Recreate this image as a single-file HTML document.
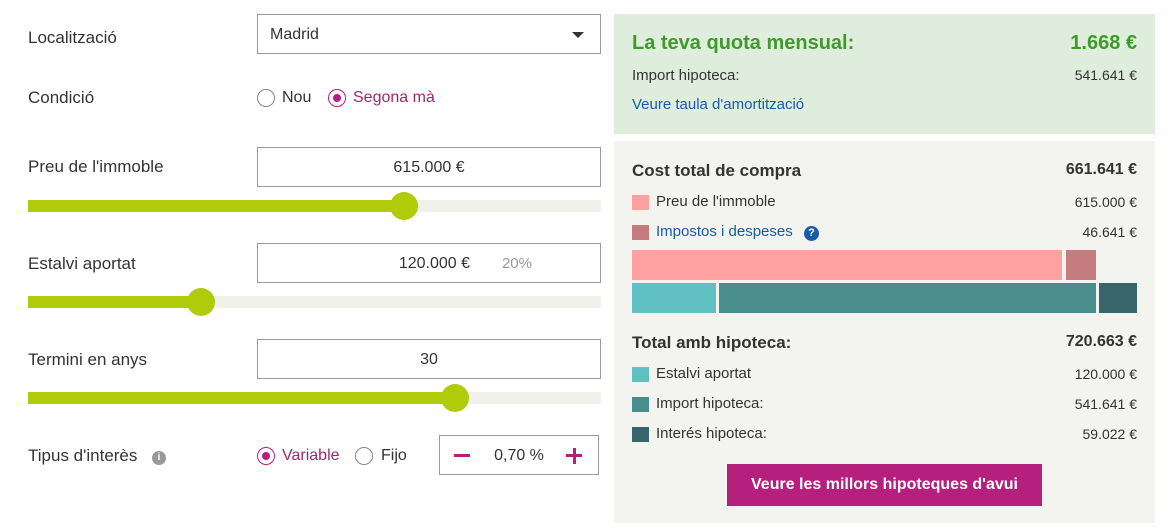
<!DOCTYPE html>
<html><head><meta charset="utf-8"><style>
*{margin:0;padding:0;box-sizing:border-box}
body{width:1173px;height:530px;background:#fff;font-family:"Liberation Sans",sans-serif;color:#333;position:relative;overflow:hidden}
.a{position:absolute}
.lbl{font-size:17px;color:#333}
.box{position:absolute;border:1px solid #999;background:#fff;height:40px}
.track{position:absolute;left:28px;width:573px;height:12px;background:#f1f1ec}
.fill{position:absolute;left:0;top:0;height:12px;background:#afcb0a}
.thumb{position:absolute;top:-8px;width:28px;height:28px;border-radius:50%;background:#afcb0a}
.radio{position:absolute;width:18px;height:18px;border-radius:50%;border:1px solid #888;background:#fff}
.radio.on{border-color:#b5207f}
.radio.on::after{content:"";position:absolute;left:4px;top:4px;width:8px;height:8px;border-radius:50%;background:#b5207f}
.r{font-size:15px;color:#333}
.val{position:absolute;right:36px;font-size:15px;color:#333}
.sq{position:absolute;left:632px;width:17px;height:15px}
</style></head><body>
<div class="a lbl" style="left:28px;top:28px">Localització</div>
<div class="box" style="left:257px;top:14px;width:344px"><span class="a" style="left:12px;top:11px;font-size:16px">Madrid</span><span class="a" style="right:16px;top:17px;width:0;height:0;border-left:6px solid transparent;border-right:6px solid transparent;border-top:6px solid #333"></span></div>

<div class="a lbl" style="left:28px;top:88px">Condició</div>
<div class="radio" style="left:257px;top:89px"></div><div class="a" style="left:282px;top:89px;font-size:16px">Nou</div>
<div class="radio on" style="left:328px;top:89px"></div><div class="a" style="left:353px;top:89px;font-size:16px;color:#a0276f">Segona mà</div>

<div class="a lbl" style="left:28px;top:157px">Preu de l'immoble</div>
<div class="box" style="left:257px;top:147px;width:344px"><span class="a" style="left:0;width:100%;text-align:center;top:11px;font-size:16px">615.000 €</span></div>
<div class="track" style="top:200px"><div class="fill" style="width:376px"></div><div class="thumb" style="left:362px"></div></div>

<div class="a lbl" style="left:28px;top:254px">Estalvi aportat</div>
<div class="box" style="left:257px;top:243px;width:344px"><span class="a" style="right:130px;top:11px;font-size:16px">120.000 €</span><span class="a" style="right:68px;top:11px;font-size:15px;color:#999">20%</span></div>
<div class="track" style="top:296px"><div class="fill" style="width:173px"></div><div class="thumb" style="left:159px"></div></div>

<div class="a lbl" style="left:28px;top:350px">Termini en anys</div>
<div class="box" style="left:257px;top:339px;width:344px"><span class="a" style="left:0;width:100%;text-align:center;top:11px;font-size:16px">30</span></div>
<div class="track" style="top:392px"><div class="fill" style="width:427px"></div><div class="thumb" style="left:413px"></div></div>

<div class="a lbl" style="left:28px;top:446px">Tipus d'interès</div>
<div class="a" style="left:152px;top:451px;width:14px;height:14px;border-radius:50%;background:#999;color:#fff;font-size:10px;font-weight:bold;text-align:center;line-height:14px">i</div>
<div class="radio on" style="left:257px;top:447px"></div><div class="a" style="left:282px;top:447px;font-size:16px;color:#a0276f">Variable</div>
<div class="radio" style="left:355px;top:447px"></div><div class="a" style="left:381px;top:447px;font-size:16px">Fijo</div>
<div class="box" style="left:439px;top:435px;width:160px"><span class="a" style="left:14px;top:18px;width:16px;height:3px;background:#b5207f"></span><span class="a" style="left:0;width:100%;text-align:center;top:11px;font-size:16px">0,70 %</span><span class="a" style="right:16px;top:18px;width:16px;height:3px;background:#b5207f"></span><span class="a" style="right:22px;top:12px;width:3px;height:16px;background:#b5207f"></span></div>

<div class="a" style="left:614px;top:14px;width:541px;height:120px;background:#dfeedc"></div>
<div class="a" style="left:632px;top:32px;font-size:20px;font-weight:bold;color:#3e9a2b">La teva quota mensual:</div>
<div class="a" style="right:36px;top:32px;font-size:20px;font-weight:bold;color:#3e9a2b">1.668 €</div>
<div class="a" style="left:632px;top:67px;font-size:15px">Import hipoteca:</div>
<div class="val" style="top:67px;font-size:14px">541.641 €</div>
<div class="a" style="left:632px;top:96px;font-size:15px;color:#1a5aa8">Veure taula d'amortització</div>

<div class="a" style="left:614px;top:141px;width:541px;height:382px;background:#f3f3ef"></div>
<div class="a" style="left:632px;top:161px;font-size:17px;font-weight:bold">Cost total de compra</div>
<div class="val" style="top:161px;font-size:16px;font-weight:bold">661.641 €</div>
<div class="sq" style="top:195px;background:#fea1a0"></div><div class="a" style="left:656px;top:193px;font-size:15px">Preu de l'immoble</div><div class="val" style="top:194px;font-size:14px">615.000 €</div>
<div class="sq" style="top:225px;background:#c47c7e"></div><div class="a" style="left:656px;top:223px;font-size:15px;color:#1a5aa8">Impostos i despeses</div>
<div class="a" style="left:804px;top:226px;width:15px;height:15px;border-radius:50%;background:#1a5aa8;color:#fff;font-size:11px;font-weight:bold;text-align:center;line-height:15px">?</div>
<div class="val" style="top:224px;font-size:14px">46.641 €</div>
<div class="a" style="left:632px;top:250px;width:430px;height:30px;background:#fea1a0"></div>
<div class="a" style="left:1066px;top:250px;width:30px;height:30px;background:#c47c7e"></div>
<div class="a" style="left:632px;top:283px;width:84px;height:30px;background:#61c1c2"></div>
<div class="a" style="left:719px;top:283px;width:377px;height:30px;background:#498d8d"></div>
<div class="a" style="left:1099px;top:283px;width:38px;height:30px;background:#38666a"></div>

<div class="a" style="left:632px;top:333px;font-size:17px;font-weight:bold">Total amb hipoteca:</div>
<div class="val" style="top:333px;font-size:16px;font-weight:bold">720.663 €</div>
<div class="sq" style="top:367px;background:#61c1c2"></div><div class="a" style="left:656px;top:365px;font-size:15px">Estalvi aportat</div><div class="val" style="top:366px;font-size:14px">120.000 €</div>
<div class="sq" style="top:397px;background:#498d8d"></div><div class="a" style="left:656px;top:395px;font-size:15px">Import hipoteca:</div><div class="val" style="top:396px;font-size:14px">541.641 €</div>
<div class="sq" style="top:427px;background:#38666a"></div><div class="a" style="left:656px;top:425px;font-size:15px">Interés hipoteca:</div><div class="val" style="top:426px;font-size:14px">59.022 €</div>

<div class="a" style="left:727px;top:464px;width:315px;height:42px;background:#b5207f;color:#fff;font-size:16px;font-weight:bold;text-align:center;line-height:42px">Veure les millors hipoteques d'avui</div>
</body></html>
